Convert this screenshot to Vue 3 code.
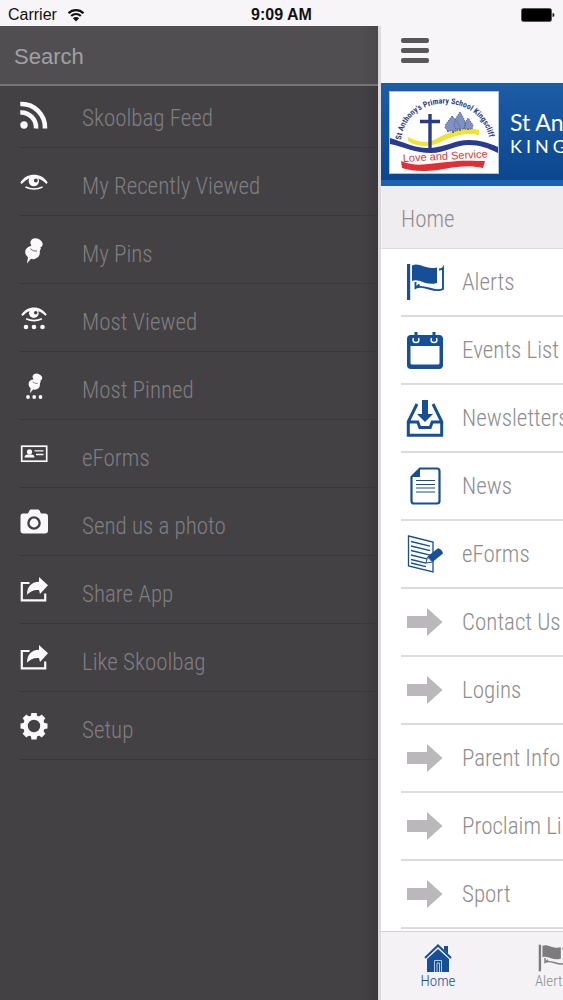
<template>
  <div class="screen">
    <div class="status-bar">
      <div class="carrier">
        <span>Carrier</span>
        <svg class="wifi" viewBox="0 0 18 14" aria-hidden="true">
          <path d="M1.5 5.2a10.6 10.6 0 0 1 15 0M4.2 8a6.8 6.8 0 0 1 9.6 0" fill="none" stroke="#111" stroke-width="2.1" />
          <path d="M9 13.4 5.9 10.2a4.4 4.4 0 0 1 6.2 0z" fill="#111" />
        </svg>
      </div>
      <div class="clock">9:09 AM</div>
      <svg class="battery" viewBox="0 0 34 14" aria-hidden="true">
        <rect x="0.5" y="0.5" width="30" height="13" rx="2" fill="#000" stroke="#555" />
        <path d="M31.5 5q2 0 2 2t-2 2z" fill="#222" />
      </svg>
    </div>

    <div class="body">
      <aside class="drawer">
        <div class="search">
          <input type="search" placeholder="Search" aria-label="Search" />
        </div>
        <nav>
          <ul class="drawer-list">
            <li v-for="item in drawerItems" :key="item.label">
              <a href="#">
                <svg class="drawer-icon" viewBox="0 0 28 28" aria-hidden="true" v-html="drawerIcons[item.icon]"></svg>
                <span>{{ item.label }}</span>
              </a>
            </li>
          </ul>
        </nav>
      </aside>

      <main class="page">
        <header class="topbar">
          <button type="button" aria-label="Menu">
            <i></i><i></i><i></i>
          </button>
        </header>

        <div class="banner">
          <svg class="crest" viewBox="0 0 110 83" role="img" aria-label="School crest">
            <rect x="0.5" y="0.5" width="109" height="82" fill="#fff" stroke="#a9c3e0" />
            <defs>
              <path id="crest-arc" d="M12 49C17 1 94 -1 101 51" />
            </defs>
            <path d="M19 46c9 5 18 7 28 2 15-8 26-13 43-9v5c-15-3-26 1-40 8-12 5-25 3-31-2z" fill="#efe33a" />
            <g class="trees">
              <path d="M64 42V28M59 41V32M71 40V24M79 39V30" stroke="#3b529c" stroke-width="1.5" />
              <path d="m63 25-3 4-3 4-1 4 3 3h9l3-4-3-6zM71 21l-4 6-2 7 2 4h8l2-5-3-7zM79 27l-3 5-1 6h8l1-4z" fill="#8191bf" stroke="#4c62a5" stroke-dasharray="1.5 1" />
            </g>
            <path d="M41 23v36M31 30.500h20" stroke="#273b8b" stroke-width="3.400" />
            <path d="M1 47c14 4 26 11 41 10 14-1 24-8 38-8 11 0 20 3 29 7v6c-10-5-18-8-29-8-14 0-24 8-38 8-16 0-26-6-41-9z" fill="#293b91" />
            <path d="M12 70c15 7 31 2 46 1 16-2 25-1 38-1l-2 7c-18-4-31 0-45 2-17 2-26 1-36-2z" fill="#e32e36" />
            <text class="arc-text"><textPath href="#crest-arc">St Anthony's Primary School Kingscliff</textPath></text>
            <text class="motto" x="14" y="71" transform="rotate(-3 14 71)">Love and Service</text>
          </svg>
          <div class="school">
            <div class="school-name">St Anthony's</div>
            <div class="school-place">KINGSCLIFF</div>
          </div>
        </div>

        <h1 class="section-title">Home</h1>

        <ul class="menu-list">
          <li v-for="item in menuItems" :key="item.label">
            <a href="#">
              <svg class="menu-icon" :class="{ muted: item.icon === 'arrow' }" viewBox="0 0 38 38" aria-hidden="true" v-html="menuIcons[item.icon]"></svg>
              <span>{{ item.label }}</span>
            </a>
          </li>
        </ul>

        <nav class="tabs">
          <a href="#" class="active">
            <svg viewBox="0 0 28 28" aria-hidden="true">
              <path d="M20 2h4v8l-4-4zM3 15v13h22V15L14 5z" fill="currentColor" />
              <path d="M1 14 14 1.500 27 14" fill="none" stroke="currentColor" stroke-width="2" />
              <path d="M10.500 28V16.500h7V28M13 28v-9h2.500v9" fill="none" stroke="#c9d9ee" stroke-width="0.900" />
            </svg>
            <span>Home</span>
          </a>
          <a href="#">
            <svg class="flag" viewBox="0 0 38 38" aria-hidden="true" v-html="menuIcons.flag"></svg>
            <span>Alerts</span>
          </a>
        </nav>
      </main>
    </div>
  </div>
</template>

<script setup>
const drawerItems = [
  { label: 'Skoolbag Feed', icon: 'feed' },
  { label: 'My Recently Viewed', icon: 'eye' },
  { label: 'My Pins', icon: 'pin' },
  { label: 'Most Viewed', icon: 'eyeDots' },
  { label: 'Most Pinned', icon: 'pinDots' },
  { label: 'eForms', icon: 'card' },
  { label: 'Send us a photo', icon: 'camera' },
  { label: 'Share App', icon: 'share' },
  { label: 'Like Skoolbag', icon: 'share' },
  { label: 'Setup', icon: 'gear' }
]

const menuItems = [
  { label: 'Alerts', icon: 'flag' },
  { label: 'Events List', icon: 'calendar' },
  { label: 'Newsletters', icon: 'inbox' },
  { label: 'News', icon: 'doc' },
  { label: 'eForms', icon: 'form' },
  { label: 'Contact Us', icon: 'arrow' },
  { label: 'Logins', icon: 'arrow' },
  { label: 'Parent Info', icon: 'arrow' },
  { label: 'Proclaim Lismore', icon: 'arrow' },
  { label: 'Sport', icon: 'arrow' }
]

const BG = '#434144'

const eye = `
  <path d="M0.300 13.500C4 8 8.500 5.800 14 5.800s10 2.200 13.700 7.700l-1.400 1.400C23.500 12 20 9.800 17 9.300H10C7.500 10 4.500 12 1.700 15z" fill="currentColor"/>
  <circle cx="13.800" cy="12" r="5.200" fill="currentColor"/>
  <circle cx="15.800" cy="11.500" r="1.900" fill="${BG}"/>
  <path d="M5.500 18q8.500 4 17 0" fill="none" stroke="currentColor" stroke-width="1.700"/>`

const pin = `
  <ellipse cx="16.500" cy="6.300" rx="6.300" ry="4.800" transform="rotate(20 16.500 6.300)" fill="currentColor"/>
  <path d="m11.500 8-1 5 8.500 3 2-5z" fill="currentColor"/>
  <ellipse cx="12.500" cy="15.500" rx="7.400" ry="6.500" transform="rotate(20 12.500 15.500)" fill="currentColor"/>
  <path d="M10.500 11.800q3 3 6.500 2.200" fill="none" stroke="${BG}" stroke-width="0.800"/>
  <path d="m8 20-1 6.500 4.500-5.500z" fill="currentColor"/>`

const teeth = [0, 45, 90, 135, 180, 225, 270, 315]
  .map(a => `<path d="M10.800 5 11.400 0.500h5.200L17.200 5z" transform="rotate(${a} 14 14)" fill="currentColor"/>`)
  .join('')

const drawerIcons = {
  feed: `
    <circle cx="4" cy="24" r="3.700" fill="currentColor"/>
    <path d="M0.300 11.500A15 15 0 0 1 16 27.500M0.300 3A23.500 23.500 0 0 1 25 27.500" fill="none" stroke="currentColor" stroke-width="4.600"/>`,
  eye,
  pin,
  eyeDots: `
    <g transform="translate(1 -3) scale(0.930)">${eye}</g>
    <circle cx="6" cy="22" r="2.300" fill="currentColor"/><circle cx="14" cy="22" r="2.300" fill="currentColor"/><circle cx="22.500" cy="22" r="2.300" fill="currentColor"/>`,
  pinDots: `
    <g transform="translate(4.500 -0.500) scale(0.780)">${pin}</g>
    <circle cx="8" cy="24" r="1.900" fill="currentColor"/><circle cx="14.200" cy="24" r="1.900" fill="currentColor"/><circle cx="20.500" cy="24" r="1.900" fill="currentColor"/>`,
  card: `
    <rect x="1.700" y="5.200" width="25" height="15" fill="none" stroke="currentColor" stroke-width="1.700"/>
    <circle cx="9.500" cy="10.800" r="2.600" fill="currentColor"/>
    <path d="M4.500 16.500q0-3 3.500-3h3q3.500 0 3.500 3zM14.500 9.200h9v1.400h-9zM16 12.800h7.500v1.400H16z" fill="currentColor"/>`,
  camera: `
    <path d="M3 4.500h5l1.500-3Q10 0.500 11 0.500h7q1 0 1.500 1l1.500 3h4q3 0 3 3v14q0 3-3 3H3.500q-3 0-3-3v-14q0-3 2.500-3z" fill="currentColor"/>
    <circle cx="14" cy="14" r="5.600" fill="none" stroke="${BG}" stroke-width="2.400"/>`,
  share: `
    <path d="M9.500 6H1.800v17.300h23.400V16.500" fill="none" stroke="currentColor" stroke-width="2.200"/>
    <path d="M19 0 28 8.300l-8 8.800-1-4.100c-5-.5-8.500 1-12 4.800C7 9.500 11 5.200 19 4.700z" fill="currentColor"/>`,
  gear: `<g transform="translate(0 -1)"><circle cx="14" cy="14" r="8.500" fill="none" stroke="currentColor" stroke-width="4.600"/>${teeth}</g>`
}

const menuIcons = {
  flag: `
    <path d="M1 1h3.200v36H1z" fill="currentColor"/>
    <path d="M6 2.500C14-1 18 7 31 4.500V20C19 23.500 14 15 6 18z" fill="currentColor"/>
    <path d="M33 6.500q3 0 4-1.500v21C28 31 18 20 9.500 25v-6M9.500 25l4-3.500" fill="none" stroke="currentColor" stroke-width="1.900"/>`,
  calendar: `
    <path fill-rule="evenodd" d="M5 4h28q4 0 4 4v26q0 4-4 4H5q-4 0-4-4V8q0-4 4-4zm-.500 11v17q0 1.500 1.500 1.500h26q1.500 0 1.500-1.500V15z" fill="currentColor"/>
    <path d="M7.500 7q-1.500 4.500 2.500 4.500T12.500 7M25.500 7q-1.500 4.500 2.500 4.500T30.500 7" fill="none" stroke="#fff" stroke-width="1.500"/>
    <path d="M8.500 1h3v8h-3zM26.500 1h3v8h-3z" fill="currentColor"/>`,
  inbox: `
    <path d="M11 5 2.300 22.500v13.700h33.400V22.500L27 5M2.300 23h9.500l2 5.500h10.400l2-5.500h9.500" fill="none" stroke="currentColor" stroke-width="3"/>
    <path d="M16 1h6v14h5l-8 8-8-8h5z" fill="currentColor"/>`,
  doc: `
    <path d="M14 1.500h17q2.500 0 2.500 2.500v30q0 2.500-2.500 2.500H8Q5.500 36.500 5.500 34V10z" fill="none" stroke="currentColor" stroke-width="2.200"/>
    <path d="M14 1.500V10H5.500z" fill="currentColor"/>
    <path d="M10 13.500h19M10 17.500h19M10 21h19M10 25h19" stroke="currentColor" stroke-width="1.200"/>`,
  form: `
    <path d="M2.500 1 27 7v30L2.500 31z" fill="none" stroke="currentColor" stroke-width="1.300"/>
    <path d="m5 6.500 19 4.700M5 11l19 4.700M5 15.500l19 4.700M5 20l17 4.200M5 24.500l15 3.700M5 28l15 3.700" stroke="currentColor" stroke-width="1.300"/>
    <path d="m21.500 21.500 10.500-8.300q4 1 5 5.300L26.500 27z" fill="currentColor"/>
    <path d="m21.500 22-1.500 6 6.500-1z" fill="#fff" stroke="currentColor" stroke-width="1"/>`,
  arrow: '<path d="M1 13h20V5l15.500 14L21 33v-8H1z" fill="currentColor"/>'
}
</script>

<style>
body {
  margin: 0;
  background: #f7f5f8;
}
</style>

<style scoped>
.screen {
  height: 100vh;
  display: flex;
  flex-direction: column;
  overflow: hidden;
  font-family: "Roboto Condensed", "Liberation Sans Narrow", Roboto, sans-serif;
  font-weight: 300;
  background: #f7f5f8;
}
ul { list-style: none; margin: 0; padding: 0; }
a { color: inherit; text-decoration: none; }
svg { display: block; flex: none; }

.status-bar {
  flex: none;
  height: 26px;
  display: grid;
  grid-template-columns: 1fr auto 1fr;
  align-items: center;
  padding: 3px 8px 0;
  box-sizing: border-box;
  font-family: "Liberation Sans", sans-serif;
  font-size: 16px;
  font-weight: 400;
  color: #111;
}
.carrier { display: flex; align-items: center; gap: 10px; }
.wifi { width: 18px; height: 14px; }
.clock { font-weight: 700; }
.battery { width: 34px; height: 14px; justify-self: end; }

.body {
  flex: 1;
  min-height: 0;
  display: grid;
  grid-template-columns: 378fr 185fr;
}

.drawer {
  min-width: 0;
  background: linear-gradient(to left, #3c3a3d, #434144 16px);
}
.search {
  height: 60px;
  box-sizing: border-box;
  border-bottom: 2px solid #767477;
  background: linear-gradient(to left, #4a484b, #504e51 16px);
}
.search input {
  width: 100%;
  height: 100%;
  box-sizing: border-box;
  padding: 4px 14px 0;
  border: 0;
  outline: 0;
  background: none;
  font-family: "Liberation Sans", sans-serif;
  font-size: 22px;
  color: #a2a0a3;
}
.search input::placeholder { color: #a2a0a3; opacity: 1; }

.drawer-list { padding-left: 20px; }
.drawer-list li { border-bottom: 1px solid #383639; }
.drawer-list a {
  height: 67px;
  box-sizing: border-box;
  display: flex;
  align-items: flex-end;
  gap: 34px;
  padding-bottom: 18px;
  font-size: 23px;
  line-height: 20px;
  color: #807e81;
  white-space: nowrap;
}
.drawer-list li:first-child a { height: 61px; }
.drawer-icon { width: 28px; height: 28px; color: #fbf9fc; }

.page {
  min-width: 0;
  display: flex;
  flex-direction: column;
  overflow: hidden;
  border-left: 3px solid #dddbde;
  background: #fff;
  color: #8f8d90;
}
.topbar {
  flex: none;
  height: 57px;
  display: flex;
  align-items: center;
  padding: 0 20px 8px;
  box-sizing: border-box;
  background: #f7f5f8;
}
.topbar button {
  width: 28px;
  padding: 0;
  border: 0;
  background: none;
  display: flex;
  flex-direction: column;
  gap: 5px;
}
.topbar i { height: 5px; border-radius: 2px; background: #59575a; }

.banner {
  flex: none;
  height: 103px;
  box-sizing: border-box;
  display: flex;
  align-items: flex-start;
  gap: 11px;
  padding: 8px 8px 0;
  border-bottom: 6px solid #1d62ae;
  background: linear-gradient(#1d5da5, #0b478f);
  overflow: hidden;
}
.crest { width: 110px; height: 83px; }
.arc-text {
  font-size: 8px;
  font-weight: 700;
  fill: #35418a;
}
.motto {
  font-family: "Liberation Sans", sans-serif;
  font-size: 11px;
  font-weight: 400;
  fill: #d93a44;
}
.school {
  padding-top: 18px;
  font-family: Lato, sans-serif;
  font-weight: 400;
  color: #fff;
  white-space: nowrap;
}
.school-name { font-size: 23px; line-height: 26px; }
.school-place { font-size: 18px; line-height: 22px; letter-spacing: 4px; }

.section-title {
  flex: none;
  height: 63px;
  box-sizing: border-box;
  margin: 0;
  padding: 5px 20px 0;
  border-bottom: 1px solid #dddbde;
  background: #efedf0;
  font-size: 23px;
  font-weight: 300;
  line-height: 58px;
}

.menu-list {
  flex: 1;
  min-height: 0;
  overflow: hidden;
  padding-left: 20px;
}
.menu-list li { border-bottom: 2px solid #dcdadd; }
.menu-list a {
  height: 66px;
  display: flex;
  align-items: center;
  gap: 18px;
  padding-left: 5px;
  font-size: 23px;
  white-space: nowrap;
}
.menu-icon { width: 38px; height: 38px; color: #164f96; }
.menu-icon.muted { color: #bab8bb; }

.tabs {
  flex: none;
  display: flex;
  height: 69px;
  box-sizing: border-box;
  border-top: 1px solid #d2d0d3;
  background: #f4f2f5;
}
.tabs a {
  flex: 0 0 114px;
  display: flex;
  flex-direction: column;
  align-items: center;
  padding-top: 12px;
  font-size: 15px;
  line-height: 18px;
}
.tabs svg { width: 28px; height: 28px; }
.tabs .flag { color: #7d7b7e; }
.tabs .active { color: #164f96; }
</style>
